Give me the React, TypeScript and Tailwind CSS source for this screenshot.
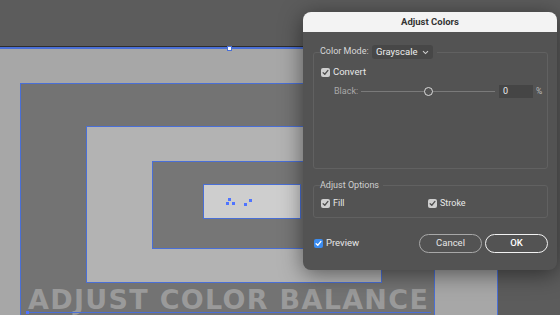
import React from "react";

const font = { fontFamily: 'Roboto, "Noto Sans", "Liberation Sans", sans-serif' };

function Check({ blue = false }: { blue?: boolean }) {
  return (
    <span
      className={`flex h-[9px] w-[9px] shrink-0 items-center justify-center rounded-[2px] ${
        blue ? "bg-[#3b8cf0]" : "bg-[#cfcfcf]"
      }`}
    >
      <svg width="7" height="7" viewBox="0 0 8 8">
        <path
          d="M1.3 4.2 L3.2 6 L6.8 1.6"
          fill="none"
          stroke={blue ? "#ffffff" : "#505050"}
          strokeWidth="1.5"
          strokeLinecap="round"
          strokeLinejoin="round"
        />
      </svg>
    </span>
  );
}

export default function App() {
  return (
    <div className="relative h-[315px] w-[560px] overflow-hidden bg-[#5c5c5c]" style={font}>
      {/* Canvas artwork */}
      <div className="absolute left-[-2px] top-[46px] h-[300px] w-[500px] border-t border-[#2e2e2e]">
        <div className="h-full w-full border-t-2 border-r border-[#4a6fd6] bg-[#a7a7a7]" />
      </div>
      <div className="absolute left-[20px] top-[83px] h-[300px] w-[415px] border border-[#4a6fd6] bg-[#737373]" />
      <div className="absolute left-[86px] top-[126px] h-[157px] w-[296px] border border-[#4a6fd6] bg-[#b3b3b3]" />
      <div className="absolute left-[152px] top-[161px] h-[88px] w-[170px] border border-[#4a6fd6] bg-[#767676]" />
      <div className="absolute left-[203px] top-[184px] h-[35px] w-[98px] border border-[#4a6fd6] bg-[#cecece]" />
      {/* anchor points */}
      <div className="absolute left-[226px] top-[202px] h-[3px] w-[3px] bg-[#4f74ff]" />
      <div className="absolute left-[228px] top-[198px] h-[3px] w-[3px] bg-[#4f74ff]" />
      <div className="absolute left-[232px] top-[202px] h-[3px] w-[3px] bg-[#4f74ff]" />
      <div className="absolute left-[244px] top-[203px] h-[3px] w-[3px] bg-[#4f74ff]" />
      <div className="absolute left-[249px] top-[199px] h-[3px] w-[3px] bg-[#4f74ff]" />
      <div className="absolute left-[227px] top-[46px] h-[5px] w-[5px] border border-[#4a6fd6] bg-white" />

      {/* Artwork text */}
      <div
        className="absolute left-[28px] top-[287px] h-[26px] whitespace-nowrap text-[27px] font-bold leading-[26px] tracking-[1.3px] text-[#9a9a9a]"
        style={{ fontFamily: '"DejaVu Sans", "Liberation Sans", sans-serif' }}
      >
        ADJUST COLOR BALANCE
      </div>
      <div className="absolute left-[27px] top-[312px] h-px w-[404px] bg-[#4a6fd6]" />
      <div className="absolute left-[26px] top-[311px] h-[3px] w-[3px] bg-[#4f74ff]" />

      {/* Dialog */}
      <div className="absolute left-[303px] top-[12px] flex h-[258px] w-[254px] flex-col overflow-hidden rounded-[8px] bg-[#535353] shadow-[0_4px_22px_rgba(0,0,0,0.5)]">
        <div className="flex h-[20px] items-center justify-center bg-[#f3f3f3] text-[9.5px] font-bold text-[#333]">
          Adjust Colors
        </div>
        <div className="flex flex-1 flex-col pl-[10px] pr-[9px] pt-[20px] text-[9px]">
          {/* group 1 */}
          <div className="relative h-[117px] rounded-[3px] border border-[#616161]">
            <div className="absolute left-[6px] top-[-8px] flex items-center bg-[#535353] pr-[4px]">
              <span className="w-[52px] text-[#d8d8d8]">Color Mode:</span>
              <div className="flex h-[14px] w-[61px] items-center justify-between rounded-[3px] bg-[#474747] pl-[4px] pr-[4px]">
                <span className="text-[9.5px] text-[#eeeeee]">Grayscale</span>
                <svg width="7" height="5" viewBox="0 0 7 5">
                  <path d="M1 1.2 L3.5 3.6 L6 1.2" fill="none" stroke="#cfcfcf" strokeWidth="1.1" />
                </svg>
              </div>
            </div>
            <div className="ml-[7px] mt-[14px] flex h-[11px] items-center gap-[3px]">
              <Check />
              <span className="text-[9.5px] text-[#e8e8e8]">Convert</span>
            </div>
            <div className="ml-[20px] mt-[7px] flex h-[13px] items-center">
              <span className="w-[27px] whitespace-nowrap text-[#a9a9a9]">Black:</span>
              <div className="relative flex h-[10px] w-[134px] items-center">
                <div className="h-px w-full bg-[#7a7a7a]" />
                <div className="absolute left-[63px] top-[0.5px] h-[9px] w-[9px] rounded-full border-[1.5px] border-[#dcdcdc] bg-[#535353]" />
              </div>
              <div className="ml-[4px] flex h-[13px] w-[34px] items-center bg-[#454545] pl-[4px] text-[#eeeeee]">
                0
              </div>
              <span className="ml-[3px] text-[8.5px] text-[#bdbdbd]">%</span>
            </div>
          </div>

          {/* group 2 */}
          <div className="relative mt-[16px] h-[33px] rounded-[3px] border border-[#616161]">
            <span className="absolute left-[6px] top-[-7px] bg-[#535353] pr-[4px] text-[#d0d0d0]">
              Adjust Options
            </span>
            <div className="ml-[7px] mt-[12px] flex h-[11px] items-center">
              <div className="flex w-[107px] items-center gap-[3px]">
                <Check />
                <span className="text-[#e8e8e8]">Fill</span>
              </div>
              <div className="flex items-center gap-[3px]">
                <Check />
                <span className="text-[#e8e8e8]">Stroke</span>
              </div>
            </div>
          </div>

          {/* footer */}
          <div className="mt-[16px] flex items-center">
            <div className="flex items-center gap-[3px] pl-[1px]">
              <Check blue />
              <span className="text-[9.5px] text-[#e8e8e8]">Preview</span>
            </div>
            <div className="ml-auto flex items-center gap-[3px]">
              <div className="flex h-[19px] w-[63px] items-center justify-center rounded-full border border-[#a8a8a8] text-[9.5px] text-[#e6e6e6]">
                Cancel
              </div>
              <div className="flex h-[19px] w-[63px] items-center justify-center rounded-full border-[1.5px] border-[#f2f2f2] text-[9.5px] font-medium text-white">
                OK
              </div>
            </div>
          </div>
        </div>
      </div>
    </div>
  );
}
